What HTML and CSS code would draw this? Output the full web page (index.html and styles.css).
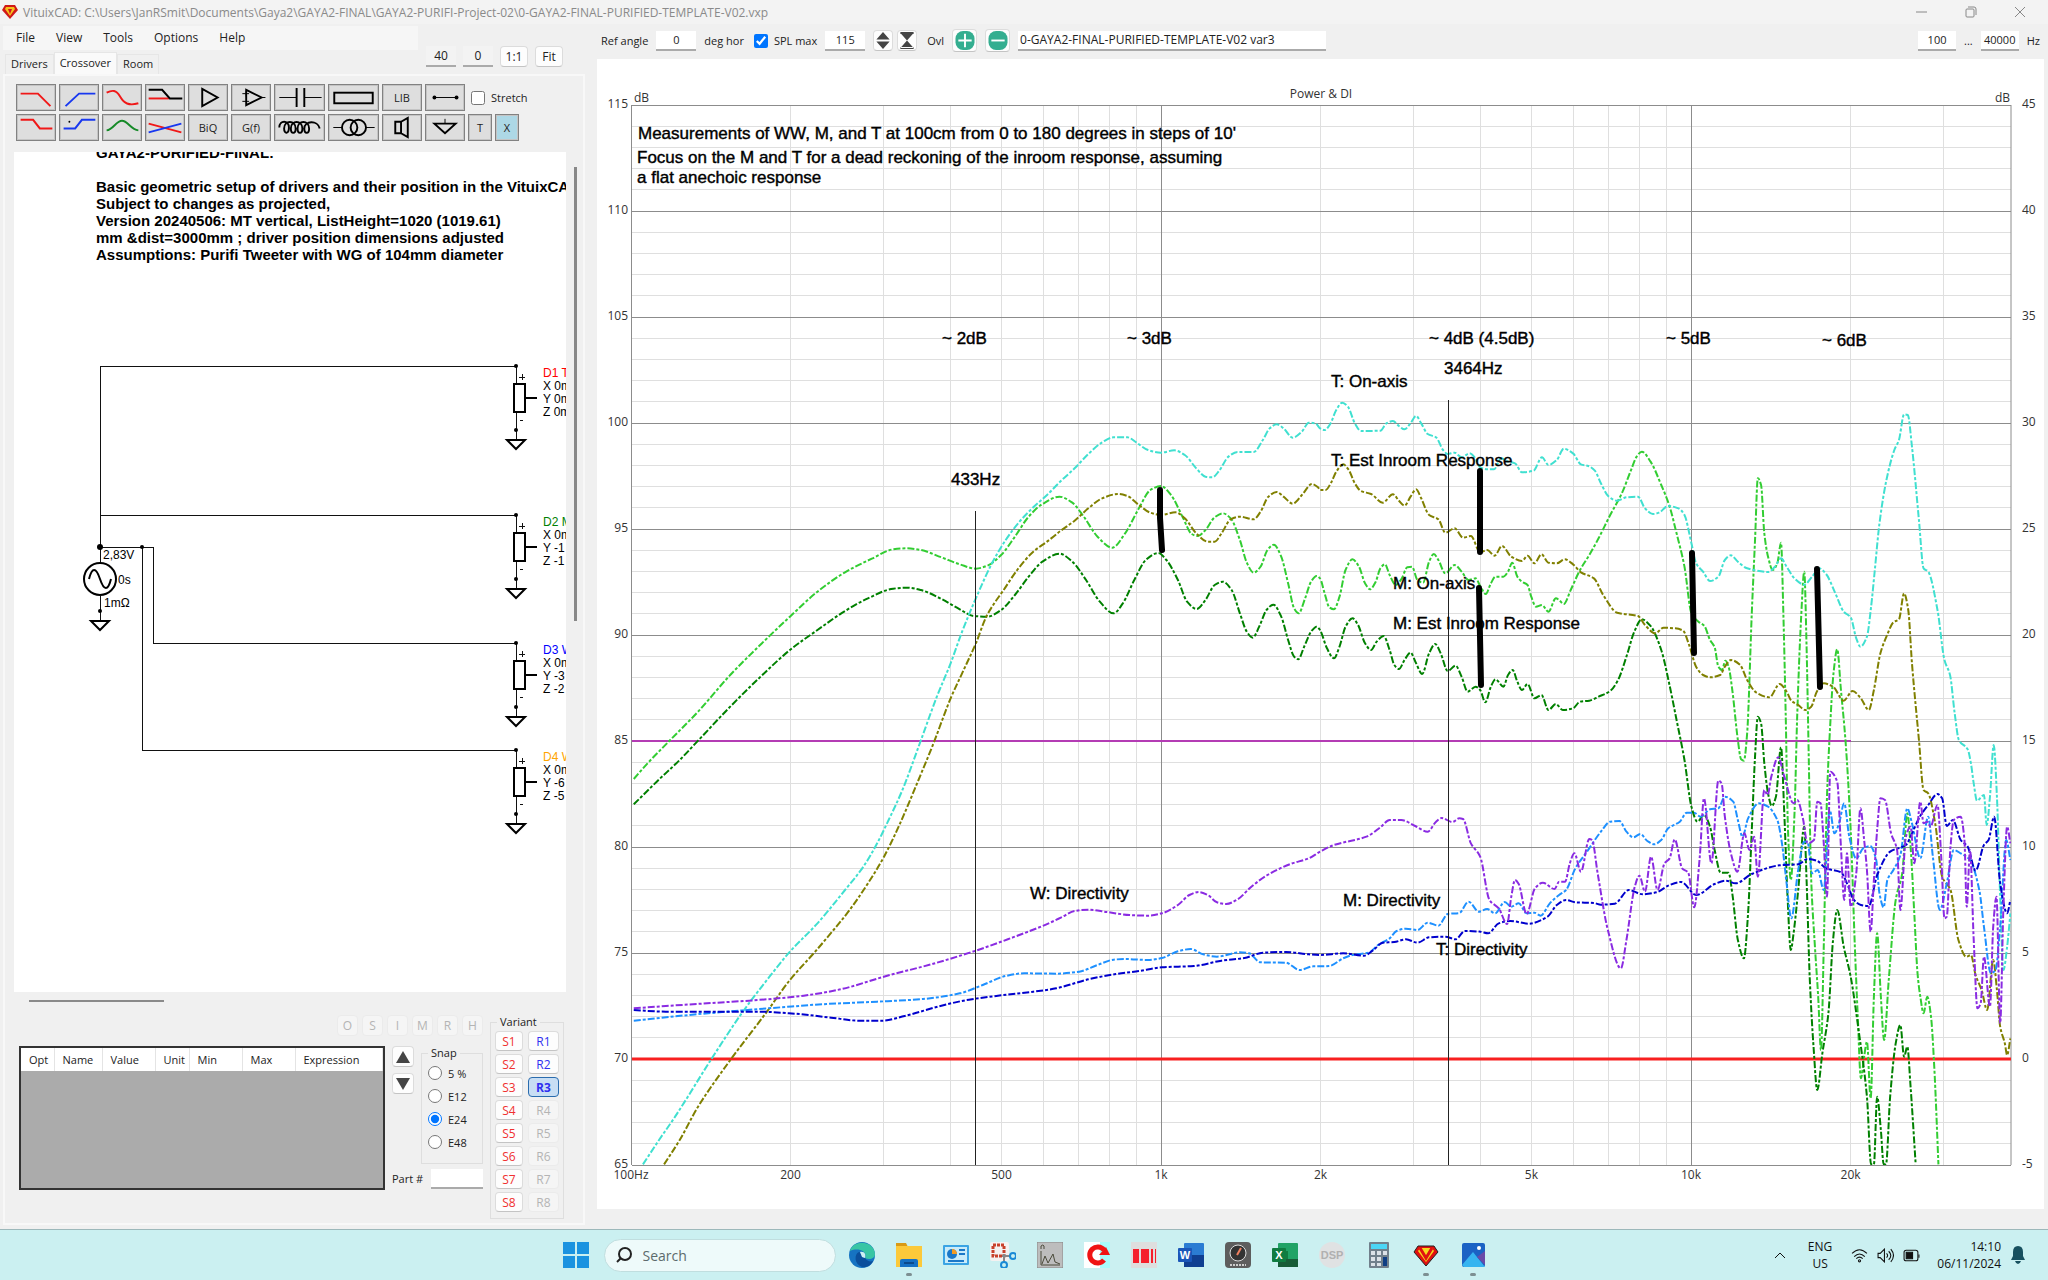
FILE: index.html
```html
<!DOCTYPE html>
<html lang="en">
  <head>
    <meta charset="UTF-8" />
    <title>VituixCAD</title>
    <link rel="stylesheet" href="styles.css">
  </head>
  <body>
    <!-- Title bar -->
    <header class="titlebar">
      <svg class="logo" viewBox="0 0 16 14"><path d="M3 0h10l3 5-8 9-8-9z" fill="#d01818"/><path d="M4 2h8l1 2-5 7-5-7z" fill="#f6c21c"/><path d="M6 4h4l-2 5z" fill="#d01818"/></svg>
      <span class="title">VituixCAD: C:\Users\JanRSmit\Documents\Gaya2\GAYA2-FINAL\GAYA2-PURIFI-Project-02\0-GAYA2-FINAL-PURIFIED-TEMPLATE-V02.vxp</span>
      <div class="window-buttons">
        <button aria-label="Minimize"><svg viewBox="0 0 12 12"><path d="M0 6h11"/></svg></button>
        <button aria-label="Restore"><svg viewBox="0 0 12 12"><rect x="1" y="3" width="8" height="8" rx="1"/><path d="M3 1h6q2 0 2 2v6"/></svg></button>
        <button aria-label="Close"><svg viewBox="0 0 12 12"><path d="M1 1l10 10M11 1L1 11"/></svg></button>
      </div>
    </header>

    <main class="workspace">
      <!-- Left side -->
      <section class="side">
        <nav class="menu">
          <button>File</button><button>View</button><button>Tools</button><button>Options</button><button>Help</button>
        </nav>
        <div class="tab-row">
          <div class="tabs">
            <button>Drivers</button><button class="active">Crossover</button><button>Room</button>
          </div>
          <div class="zoom-box">
            <input class="field" value="40" aria-label="Grid width" />
            <input class="field" value="0" aria-label="Grid offset" />
            <button class="btn">1:1</button>
            <button class="btn">Fit</button>
          </div>
        </div>

        <div class="tab-page">
          <div class="tools">
            <button aria-label="Low pass"><svg viewBox="0 0 38 26"><path class="red" d="M3 9h18l13 13"/></svg></button>
            <button aria-label="High pass"><svg viewBox="0 0 38 26"><path class="blue" d="M5 22L19 9h17"/></svg></button>
            <button aria-label="Shelf"><svg viewBox="0 0 38 26"><path class="red" d="M3 8C9 5 13 5 17 12S26 22 36 19"/></svg></button>
            <button aria-label="Slope"><svg viewBox="0 0 38 26"><path class="red" d="M2 14h21"/><path class="blk" d="M2 5h14l8 9h13"/></svg></button>
            <button aria-label="Buffer"><svg viewBox="0 0 38 26"><path class="blk" d="M13 4v18l16-9z"/></svg></button>
            <button aria-label="Op-amp"><svg viewBox="0 0 38 26"><path class="blk" d="M14 5v16l16-8z"/><path class="thin" d="M10 9h7M10 17h7M14 6v6M30 13h4"/></svg></button>
            <button aria-label="Capacitor"><svg viewBox="0 0 50 26"><path class="blk" d="M22 3v20M30 3v20"/><path class="thin" d="M4 13h18M30 13h18"/></svg></button>
            <button aria-label="Resistor"><svg viewBox="0 0 50 26"><rect class="blk" x="5" y="8" width="40" height="11"/></svg></button>
            <button>LIB</button>
            <button aria-label="Wire"><svg viewBox="0 0 38 26"><path class="thin" d="M8 13h23"/><circle cx="8" cy="13" r="2"/><circle cx="31" cy="13" r="2"/></svg></button>
            <label class="stretch"><input type="checkbox" /> Stretch</label>
            <button aria-label="Low shelf"><svg viewBox="0 0 38 26"><path class="red" d="M3 5h13l7 9h13"/></svg></button>
            <button aria-label="High shelf"><svg viewBox="0 0 38 26"><path class="blue" d="M3 14h12l7-9h14"/><circle cx="9" cy="7" r="1"/></svg></button>
            <button aria-label="Peak"><svg viewBox="0 0 38 26"><path class="green" d="M3 16C10 15 13 6 19 6s9 9 17 10"/></svg></button>
            <button aria-label="Cross"><svg viewBox="0 0 38 26"><path class="red" d="M2 9l34 9"/><path class="blue" d="M2 18l34-9"/></svg></button>
            <button>BiQ</button>
            <button>G(f)</button>
            <button aria-label="Inductor"><svg viewBox="0 0 50 26"><path class="blk" d="M4 13c0-8 10-8 10 0 0 7-5 7-5 1 0-9 12-9 12 0 0 6-5 6-5 0 0-9 12-9 12 0 0 6-5 6-5 0 0-9 12-9 12 0 0 6-5 6-5 0 0-8 14-9 16 0"/></svg></button>
            <button aria-label="Transformer"><svg viewBox="0 0 50 26"><circle class="blk" cx="21" cy="13" r="8"/><circle class="blk" cx="30" cy="13" r="8"/><path class="thin" d="M4 13h9M38 13h9"/></svg></button>
            <button aria-label="Driver"><svg viewBox="0 0 38 26"><path class="blk" d="M12 7h6v12h-6zM18 7l7-4v20l-7-4"/></svg></button>
            <button aria-label="Ground"><svg viewBox="0 0 38 26"><path class="blk" d="M8 9h22L19 19z"/><path class="thin" d="M19 4v5"/></svg></button>
            <div class="small-tools"><button>T</button><button class="delete">X</button></div>
          </div>

          <div class="canvas-row">
            <svg class="schematic" viewBox="0 0 552 840">
              <g class="note">
                <text x="82" y="6">GAYA2-PURIFIED-FINAL:</text>
                <text x="82" y="40">Basic geometric setup of drivers and their position in the VituixCAD</text>
                <text x="82" y="57">Subject to changes as projected,</text>
                <text x="82" y="74">Version 20240506: MT vertical, ListHeight=1020 (1019.61)</text>
                <text x="82" y="91">mm &amp;dist=3000mm ; driver position dimensions adjusted</text>
                <text x="82" y="108">Assumptions: Purifi Tweeter with WG of 104mm diameter</text>
              </g>
              <path class="wire" d="M502 214H86V411M86 363H502M86 395H139V491H502M128 395V598H502M86 444V469"/>
              <g class="dots"><circle cx="86" cy="395" r="3"/><circle cx="128" cy="395" r="2"/><circle cx="86" cy="459" r="2"/></g>
              <circle class="sym" cx="86" cy="427" r="16"/>
              <path class="sym" d="M75 427C78 415 82 415 86 427S94 439 97 427"/>
              <path class="sym" d="M77 469h18l-9 9z"/>
              <g class="part">
                <text x="89" y="407">2,83V</text><text x="104" y="432">0s</text><text x="90" y="455">1mΩ</text>
              </g>
              <defs>
                <g id="driver">
                  <path class="wire" d="M0 0V18M0 46V74"/>
                  <circle r="2"/><circle cy="64" r="2"/>
                  <path class="sym" d="M-2 18H9V46H-2zM9 32H21M-9 74H9L0 83z"/>
                  <path class="wire" d="M3 11h6M6 8v6M4 54h3"/>
                </g>
              </defs>
              <use href="#driver" x="502" y="214"/>
              <use href="#driver" x="502" y="363"/>
              <use href="#driver" x="502" y="491"/>
              <use href="#driver" x="502" y="598"/>
              <g class="part">
                <text class="d1" x="529" y="225">D1 T</text><text x="529" y="238">X 0mm</text><text x="529" y="251">Y 0mm</text><text x="529" y="264">Z 0mm</text>
                <text class="d2" x="529" y="374">D2 M</text><text x="529" y="387">X 0mm</text><text x="529" y="400">Y -1</text><text x="529" y="413">Z -1</text>
                <text class="d3" x="529" y="502">D3 W</text><text x="529" y="515">X 0mm</text><text x="529" y="528">Y -3</text><text x="529" y="541">Z -2</text>
                <text class="d4" x="529" y="609">D4 W</text><text x="529" y="622">X 0mm</text><text x="529" y="635">Y -6</text><text x="529" y="648">Z -5</text>
              </g>
            </svg>
            <div class="vscroll"></div>
          </div>
          <div class="hscroll"></div>

          <div class="bottom">
            <div class="bottom-left">
              <div class="letters">
                <button class="btn" disabled>O</button><button class="btn" disabled>S</button><button class="btn" disabled>I</button><button class="btn" disabled>M</button><button class="btn" disabled>R</button><button class="btn" disabled>H</button>
              </div>
              <div class="params">
                <div class="param-box">
                  <table>
                    <thead><tr><th class="w-opt">Opt</th><th class="w-name">Name</th><th class="w-value">Value</th><th class="w-unit">Unit</th><th class="w-min">Min</th><th class="w-min">Max</th><th>Expression</th></tr></thead>
                  </table>
                </div>
                <div class="arrows">
                  <button class="btn" aria-label="Up"><svg viewBox="0 0 14 12"><path d="M7 0l7 12H0z"/></svg></button>
                  <button class="btn" aria-label="Down"><svg viewBox="0 0 14 12"><path d="M7 12L0 0h14z"/></svg></button>
                </div>
                <fieldset class="snap">
                  <legend>Snap</legend>
                  <label><input type="radio" name="snap" /> 5 %</label>
                  <label><input type="radio" name="snap" /> E12</label>
                  <label><input type="radio" name="snap" checked /> E24</label>
                  <label><input type="radio" name="snap" /> E48</label>
                </fieldset>
                <label class="part-no">Part # <input class="field" /></label>
              </div>
            </div>
            <fieldset class="variant">
              <legend>Variant</legend>
              <button class="btn s">S1</button><button class="btn r">R1</button>
              <button class="btn s">S2</button><button class="btn r">R2</button>
              <button class="btn s">S3</button><button class="btn r current">R3</button>
              <button class="btn s">S4</button><button class="btn" disabled>R4</button>
              <button class="btn s">S5</button><button class="btn" disabled>R5</button>
              <button class="btn s">S6</button><button class="btn" disabled>R6</button>
              <button class="btn s">S7</button><button class="btn" disabled>R7</button>
              <button class="btn s">S8</button><button class="btn" disabled>R8</button>
            </fieldset>
          </div>
        </div>
      </section>

      <!-- Chart side -->
      <section class="graph">
        <div class="graph-bar">
          <label for="angle">Ref angle</label>
          <input class="field num" id="angle" value="0" />
          <span>deg hor</span>
          <label class="spl"><input type="checkbox" checked /> SPL max</label>
          <input class="field num" value="115" aria-label="SPL max value" />
          <button class="btn mini" aria-label="Shift"><svg viewBox="0 0 14 18"><path d="M7 0l7 8H0zM7 18l7-8H0z"/></svg></button>
          <button class="btn mini" aria-label="Compress"><svg viewBox="0 0 14 18"><path d="M0 1h14L7 9zM0 17h14L7 9zM0 0h14v2H0zM0 16h14v2H0z"/></svg></button>
          <span class="ovl">Ovl</span>
          <button class="btn round" aria-label="Add overlay"><svg viewBox="0 0 20 20"><rect width="20" height="20" rx="8"/><path d="M10 3v14M3 10h14"/></svg></button>
          <button class="btn round" aria-label="Remove overlay"><svg viewBox="0 0 20 20"><rect width="20" height="20" rx="8"/><path d="M3 10h14"/></svg></button>
          <input class="field overlay-name" value="0-GAYA2-FINAL-PURIFIED-TEMPLATE-V02 var3" aria-label="Overlay name" />
          <div class="range">
            <input class="field" value="100" aria-label="From" /><span>...</span><input class="field" value="40000" aria-label="To" /><span>Hz</span>
          </div>
        </div>

        <svg class="chart" viewBox="597 59 1447 1150">
          <defs><clipPath id="plotArea"><rect x="632" y="105" width="1379" height="1060"/></clipPath></defs>
          <g id="grid"></g>
          <g id="traces" clip-path="url(#plotArea)"></g>
          <path class="marker" d="M975 511V1165M1448 400V1165"/>
          <path class="bar" d="M1160 490V518L1162 550M1480 471V552M1479 588L1481 685M1692 553L1694 653M1817 569L1820 687"/>
          <g class="notes">
            <text x="638" y="139">Measurements of WW, M, and T at 100cm from 0 to 180 degrees in steps of 10'</text>
            <text x="637" y="163">Focus on the M and T for a dead reckoning of the inroom response, assuming</text>
            <text x="637" y="183">a flat anechoic response</text>
            <text x="942" y="344">~ 2dB</text>
            <text x="1127" y="344">~ 3dB</text>
            <text x="1429" y="344">~ 4dB (4.5dB)</text>
            <text x="1666" y="344">~ 5dB</text>
            <text x="1822" y="346">~ 6dB</text>
            <text x="1444" y="374">3464Hz</text>
            <text x="1331" y="387">T: On-axis</text>
            <text x="1331" y="466">T: Est Inroom Response</text>
            <text x="1393" y="589">M: On-axis</text>
            <text x="1393" y="629">M: Est Inroom Response</text>
            <text x="951" y="485">433Hz</text>
            <text x="1030" y="899">W: Directivity</text>
            <text x="1343" y="906">M: Directivity</text>
            <text x="1436" y="955">T: Directivity</text>
          </g>
          <g class="axis" id="axis">
            <text x="1321" y="98" text-anchor="middle">Power &amp; DI</text>
            <text x="634" y="102">dB</text>
            <text x="1995" y="102">dB</text>
          </g>
        </svg>
      </section>
    </main>

    <!-- Taskbar -->
    <footer class="taskbar">
      <div></div>
      <div class="apps">
        <button class="start" aria-label="Start"><svg viewBox="0 0 26 26"><path fill="#1b93e0" d="M0 0h12v12H0zM14 0h12v12H14zM0 14h12v12H0zM14 14h12v12H14z"/></svg></button>
        <label class="search"><svg viewBox="0 0 16 16"><circle cx="9" cy="7" r="6"/><path d="M5 11l-4 4"/></svg><input placeholder="Search" aria-label="Search" /></label>
        <button aria-label="Edge"><svg viewBox="0 0 26 26"><circle cx="13" cy="13" r="13" fill="#1673c2"/><path d="M1 9C4-3 25-2 26 12c0 5-6 6-10 4 3-6-6-11-15-7z" fill="#38c5a4"/><path d="M16 16c-5 0-3-6-6-6-5 2-5 12 3 15 6 1 10-3 11-6-3 1-6 0-8-3z" fill="#0b4f9c"/><path d="M11 10c5-1 6 3 5 6l-3-1z" fill="#cdf0f2"/></svg></button>
        <button class="open" aria-label="Files"><svg viewBox="0 0 26 26"><path fill="#d99a16" d="M0 1h10l2 4H0z"/><path fill="#fcc93a" d="M0 4h26v21H0z"/><path fill="#1470c4" d="M4 25v-6q0-2 2-2h14q2 0 2 2v6z"/><path fill="#0a4a8c" d="M8 20h10v2H8z"/></svg></button>
        <button aria-label="Control panel"><svg viewBox="0 0 26 26"><rect x="0" y="3" width="26" height="20" rx="1" fill="#3ba4e4"/><rect x="2" y="5" width="22" height="16" fill="#c9ecfa"/><circle cx="9" cy="12" r="5" fill="#1b78c8"/><path d="M9 12V7a5 5 0 0 1 5 5z" fill="#f59b22"/><path d="M16 8h6M16 12h6M5 19h16" stroke="#1b78c8" stroke-width="2"/></svg></button>
        <button aria-label="Snipping tool"><svg viewBox="0 0 26 26"><rect width="19" height="19" rx="2" fill="#f4f1f0"/><path d="M3 3h11v11H3z" fill="none" stroke="#c8402a" stroke-width="3" stroke-dasharray="3 1"/><path d="M14 12v9M12 14h9" stroke="#888" stroke-width="2"/><circle cx="14" cy="23" r="3" fill="none" stroke="#1a8ad6" stroke-width="2"/><circle cx="23" cy="14" r="3" fill="none" stroke="#1a8ad6" stroke-width="2"/></svg></button>
        <button aria-label="Measurement"><svg viewBox="0 0 26 26"><path fill="#bdbdbd" stroke="#888" d="M0 0h26v26H0z"/><path d="M4 9v14h19M5 22l3-8 3 7 5-9 2 8 5 2M4 7V4q2-2 3 0v3" fill="none" stroke="#4a4a3a"/></svg></button>
        <button aria-label="Redo"><svg viewBox="0 0 26 26"><path fill="#fff" d="M0 0h16v26H0z"/><path fill="#a8fafa" d="M16 0h10v26H16z"/><path d="M20 18a8 8 0 1 1 0-10" fill="none" stroke="#f01414" stroke-width="5"/><path fill="#f01414" d="M15 13h11l-4-8z"/></svg></button>
        <button aria-label="Bars"><svg viewBox="0 0 26 26"><path fill="#dedede" d="M0 0h26v26H0z"/><path fill="#f5202c" d="M2 7h6v14H2zM10 7h8v14h-8zM20 7h2v14h-2zM24 7h1v14h-1z"/></svg></button>
        <button aria-label="Word"><svg viewBox="0 0 26 26"><rect x="6" y="1" width="20" height="24" rx="1" fill="#2b7cd3"/><path fill="#103f91" d="M6 13h20v12H6z"/><rect y="6" width="14" height="14" rx="1" fill="#1a56b8"/><text x="7" y="17" class="tile">W</text></svg></button>
        <button aria-label="Meter"><svg viewBox="0 0 26 26"><rect width="26" height="26" rx="4" fill="#5d5d5d"/><circle cx="13" cy="11" r="8" fill="#333" stroke="#ddd"/><path d="M12 13l4-7" stroke="#f08060" stroke-width="2"/><path d="M5 23h16" stroke="#ccc" stroke-width="2" stroke-dasharray="2 1"/></svg></button>
        <button aria-label="Excel"><svg viewBox="0 0 26 26"><rect x="6" y="1" width="20" height="24" rx="1" fill="#21a366"/><path fill="#185c37" d="M6 17h20v8H6z"/><path fill="#107c41" d="M6 9h10v8H6z"/><rect y="6" width="14" height="14" rx="1" fill="#107c41"/><text x="7" y="17" class="tile">X</text></svg></button>
        <button aria-label="DSP"><svg viewBox="0 0 26 26"><circle cx="13" cy="13" r="13" fill="#e0e2e3"/><text x="13" y="17" class="tile dsp">DSP</text></svg></button>
        <button aria-label="Calculator"><svg viewBox="0 0 26 26"><rect x="3" width="20" height="26" rx="1" fill="#71808c"/><path fill="#4cd6f6" d="M5 2h16v5H5z"/><path fill="#dce2e8" d="M5 9h4v4H5zM11 9h4v4h-4zM17 9h4v4h-4zM5 15h4v4H5zM11 15h4v4h-4zM5 21h4v3H5zM11 21h4v3h-4z"/><path fill="#0f3f84" d="M17 15h4v9h-4z"/></svg></button>
        <button class="open" aria-label="VituixCAD"><svg viewBox="0 0 26 26"><path d="M5 4h16l4 6-12 14L1 10z" fill="#e01010" stroke="#222"/><path d="M7 6h12l2 3-8 11-8-11z" fill="#f6d81c"/><path d="M7 6l6 10 6-10" fill="none" stroke="#e01010" stroke-width="3"/></svg></button>
        <button class="open" aria-label="Photos"><svg viewBox="0 0 26 26"><rect x="2" y="1" width="23" height="24" rx="2" fill="#1b62c4"/><path d="M2 23l11-13 12 15H4z" fill="#36b4f0"/><path d="M17 15l8-6v14z" fill="#6a4aa8"/><circle cx="19" cy="6" r="2" fill="#fff"/></svg></button>
      </div>
      <div class="tray">
        <svg class="chev" viewBox="0 0 12 8"><path d="M1 7l5-5 5 5"/></svg>
        <div class="lang">ENG<br />US</div>
        <svg class="ic" viewBox="0 0 16 14"><path d="M1 5q7-7 14 0M3 8q5-5 10 0M5 10q3-3 6 0"/><circle cx="8" cy="12" r="1"/></svg>
        <svg class="ic" viewBox="0 0 16 14"><path d="M1 5h2l4-4v12L3 9H1zM9 5q2 2 0 4M11 3q4 4 0 8M13 1q5 6 0 12"/></svg>
        <svg class="ic" viewBox="0 0 16 14"><rect x="1" y="2" width="13" height="10" rx="2"/><path d="M3 4h6v6H3z" fill="#111"/><path d="M15 6v3"/></svg>
        <div class="clock">14:10<br />06/11/2024</div>
        <svg class="bell" viewBox="0 0 16 18"><path d="M8 0q5 0 5 6v4l2 4H1l2-4V6q0-6 5-6zM5 15h6q-1 3-3 3t-3-3z"/></svg>
      </div>
    </footer>
    <script src="script.js"></script>
  </body>
</html>
```
FILE: styles.css
```css
* {
  box-sizing: border-box;
}

body {
  margin: 0;
  min-height: 100vh;
  display: grid;
  grid-template-rows: 24px 1fr 51px;
  background: #f0f0f0;
  color: #222;
  font-family: "Open Sans", "Liberation Sans", sans-serif;
  font-size: 12px;
}

button,
input {
  font: inherit;
  color: inherit;
  margin: 0;
  padding: 0;
}

button {
  border: none;
  background: none;
}

.titlebar {
  display: flex;
  align-items: center;
  background: #f3f3f3;
  color: #8a8a8a;
  padding: 0 22px 0 2px;
}

.logo {
  width: 16px;
  height: 14px;
  margin-right: 5px;
}

.title {
  flex: 1;
  font-size: 12px;
}

.window-buttons {
  display: flex;
  gap: 37px;
}

.window-buttons svg {
  display: block;
  width: 12px;
  height: 12px;
  fill: none;
  stroke: #888;
}

.workspace {
  display: grid;
  grid-template-columns: 597px 1fr;
}

/* left side */
.side {
  display: flex;
  flex-direction: column;
  padding: 2px 12px 4px 3px;
}

.menu {
  display: flex;
  gap: 21px;
  width: 415px;
  height: 24px;
  padding: 0 0 2px 13px;
  background: #f6f6f6;
}

.tab-row {
  display: flex;
  justify-content: space-between;
  align-items: flex-end;
  height: 24px;
}

.tabs {
  display: flex;
  align-items: flex-end;
  padding-left: 2px;
}

.tabs button {
  height: 20px;
  padding: 0 5px 2px;
  border: 1px solid #e6e6e6;
  border-bottom: none;
  font-size: 11px;
}

.tabs .active {
  height: 22px;
  background: #fafafa;
}

.zoom-box {
  display: flex;
  gap: 7px;
  padding: 0 22px 7px 0;
}

.zoom-box .field {
  width: 30px;
  height: 21px;
  background: #f3f3f3;
  text-align: center;
}

.zoom-box .btn {
  width: 28px;
}

.field {
  min-width: 0;
  height: 20px;
  border: none;
  border-bottom: 2px solid #aaa;
  background: #fff;
}

.btn {
  height: 21px;
  border: 1px solid #dcdcdc;
  border-bottom-color: #c4c4c4;
  border-radius: 4px;
  background: #fdfdfd;
}

.btn:disabled {
  color: #b4b4b4;
  background: #f5f5f5;
  border-color: #ebebeb;
}

.tab-page {
  flex: 1;
  border: 2px solid #f8f8f8;
  padding: 8px 17px 0 9px;
}

.tools {
  display: grid;
  grid-template-columns: repeat(6, 40px) 51px 51px 40px 40px 1fr;
  grid-auto-rows: 27px;
  gap: 3px;
  padding-left: 2px;
}

.tools button {
  border: 1px solid #828282;
  outline: 1px solid #c4c4c4;
  outline-offset: -2px;
  background: #dedede;
  font-size: 11px;
}

.tools svg {
  display: block;
  width: 100%;
  height: 25px;
}

.red,
.blue,
.green,
.blk,
.thin {
  fill: none;
  stroke-width: 2px;
}

.red { stroke: #f01818; }
.blue { stroke: #1838f0; }
.green { stroke: #168a28; }
.blk { stroke: #000; }
.thin { stroke: #000; stroke-width: 1px; }

.stretch {
  display: flex;
  align-items: center;
  gap: 6px;
  padding-left: 3px;
  font-size: 11px;
}

.stretch input,
.spl input {
  width: 14px;
  height: 14px;
}

.small-tools {
  display: flex;
  gap: 3px;
}

.small-tools button {
  width: 24px;
}

.small-tools .delete {
  background: #add8e6;
}

.canvas-row {
  display: flex;
  gap: 8px;
  margin-top: 11px;
}

.schematic {
  display: block;
  flex: 1;
  min-width: 0;
  background: #fff;
  overflow: hidden;
}

.note text {
  font: bold 15px "Liberation Sans", sans-serif;
}

.part text {
  font: 12px "Liberation Sans", sans-serif;
}

.wire {
  fill: none;
  stroke: #111;
  stroke-width: 1px;
  shape-rendering: crispEdges;
}

.sym {
  fill: none;
  stroke: #000;
  stroke-width: 2px;
}

.d1 { fill: red; }
.d2 { fill: green; }
.d3 { fill: blue; }
.d4 { fill: orange; }

.vscroll {
  width: 3px;
  height: 454px;
  margin: 15px -11px 0 0;
  background: #888;
}

.hscroll {
  width: 135px;
  height: 2px;
  margin: 8px 0 0 15px;
  background: #8a8a8a;
}

.bottom {
  display: flex;
  justify-content: space-between;
  margin-top: 13px;
  padding: 0 2px 0 5px;
}

.letters {
  display: flex;
  justify-content: flex-end;
  gap: 4px;
}

.letters .btn {
  width: 21px;
}

.params {
  display: grid;
  grid-template-columns: 366px 22px 62px;
  gap: 0 7px;
  margin-top: 6px;
}

.param-box {
  grid-row: span 2;
  height: 144px;
  margin-top: 4px;
  border: 2px solid #333;
  background: #ababab;
}

.param-box table {
  width: 100%;
  border-collapse: collapse;
  table-layout: fixed;
  background: #fff;
}

.param-box th {
  height: 23px;
  padding: 0 0 0 8px;
  border-right: 1px solid #e4e4e4;
  font-weight: normal;
  font-size: 11px;
  text-align: left;
}

.w-opt { width: 33px; }
.w-name { width: 48px; }
.w-value { width: 53px; }
.w-unit { width: 34px; }
.w-min { width: 53px; }

.arrows {
  display: flex;
  flex-direction: column;
  gap: 6px;
  padding-top: 4px;
}

.arrows svg,
.mini svg {
  width: 14px;
  height: 12px;
  display: block;
  margin: auto;
  fill: #444;
}

fieldset {
  margin: 0;
  border: 1px solid #dedede;
}

legend {
  padding: 0 3px;
  line-height: 14px;
}

.snap {
  display: flex;
  flex-direction: column;
  gap: 7px;
  height: 118px;
  margin-top: 4px;
  padding: 5px 0 0 6px;
}

.snap legend,
.variant legend {
  margin-left: 0;
  font-size: 11px;
}

.snap label {
  display: flex;
  align-items: center;
  gap: 6px;
  height: 16px;
  font-size: 11px;
}

.snap input {
  width: 14px;
  height: 14px;
}

.part-no {
  grid-column: 2 / 4;
  display: flex;
  align-items: center;
  gap: 8px;
  white-space: nowrap;
  font-size: 11px;
}

.part-no .field {
  flex: 1;
}

.variant {
  display: grid;
  grid-template-columns: 28px 31px;
  grid-auto-rows: 20px;
  gap: 3px 5px;
  width: 74px;
  height: 204px;
  padding: 2px 4px;
}

.variant legend {
  margin-left: 2px;
}

.variant .btn {
  height: 20px;
}

.s { color: #f03030; }
.r { color: #3030f0; }

.variant .current {
  border: 1px solid #2a6cae;
  background: #c8def4;
  font-weight: bold;
}

/* graph side */
.graph {
  padding-right: 4px;
}

.graph-bar {
  display: flex;
  align-items: center;
  gap: 8px;
  height: 35px;
  padding: 0 4px 2px;
  font-size: 11px;
}

.num {
  width: 40px;
  text-align: center;
}

.spl {
  display: flex;
  align-items: center;
  gap: 6px;
  padding-left: 2px;
}

.mini {
  width: 20px;
}

.mini svg {
  height: 17px;
}

.mini + .mini {
  margin-left: -4px;
}

.ovl {
  margin-left: 2px;
}

.round {
  width: 25px;
  height: 23px;
}

.round svg {
  display: block;
  width: 20px;
  height: 19px;
  margin: auto;
  fill: #34ae90;
  stroke: #fff;
  stroke-width: 2px;
}

.round svg rect {
  stroke: none;
}

.overlay-name {
  width: 308px;
  padding-left: 2px;
  font-size: 12px;
}

.range {
  display: flex;
  align-items: center;
  gap: 8px;
  margin-left: auto;
}

.range .field {
  width: 38px;
  text-align: center;
}

.chart {
  display: block;
  width: 100%;
  background: #fff;
}

.minor {
  fill: none;
  stroke: #dfdfdf;
  stroke-width: 1px;
}

.major {
  fill: none;
  stroke: #8c8c8c;
  stroke-width: 1px;
}

.limit {
  stroke: #b43cb4;
  stroke-width: 2px;
}

.zero {
  stroke: #f82020;
  stroke-width: 3px;
}

.trace {
  fill: none;
  stroke-width: 2px;
  stroke-dasharray: 7 2 3 2;
}

.marker {
  stroke: #222;
  shape-rendering: crispEdges;
}

.bar {
  fill: none;
  stroke: #000;
  stroke-width: 6px;
  stroke-linecap: round;
}

.notes text {
  font: 17px "Liberation Sans", sans-serif;
  fill: #000;
  stroke: #000;
  stroke-width: 0.4px;
}

.axis text {
  font-size: 12px;
  fill: #333;
}

/* taskbar */
.taskbar {
  display: grid;
  grid-template-columns: 1fr auto 1fr;
  align-items: center;
  border-top: 1px solid #9cb8ba;
  background: #cbf0f1;
}

.apps {
  display: flex;
  align-items: center;
  gap: 21px;
}

.apps button {
  position: relative;
  width: 26px;
  height: 26px;
}

.apps button svg {
  display: block;
  width: 26px;
  height: 26px;
}

.apps .start {
  margin-right: -6px;
}

.apps .open::after {
  content: "";
  position: absolute;
  left: 10px;
  bottom: -8px;
  width: 6px;
  height: 3px;
  border-radius: 2px;
  background: #7d8f92;
}

.search {
  display: flex;
  align-items: center;
  gap: 11px;
  width: 232px;
  height: 33px;
  margin-right: -8px;
  padding-left: 11px;
  border: 1px solid #c0dedf;
  border-radius: 17px;
  background: #eefafa;
}

.search svg {
  width: 16px;
  height: 16px;
  fill: none;
  stroke: #222;
  stroke-width: 2px;
}

.search input {
  width: 150px;
  border: none;
  background: none;
  font-size: 14px;
}

.search input::placeholder {
  color: #5c6a6c;
}

.tile {
  font: bold 11px "Liberation Sans", sans-serif;
  fill: #fff;
  text-anchor: middle;
}

.dsp {
  fill: #b0b0b0;
}

.tray {
  display: flex;
  justify-content: flex-end;
  align-items: center;
  gap: 9px;
  padding-right: 22px;
  line-height: 17px;
  color: #111;
}

.tray svg {
  fill: none;
  stroke: #111;
}

.tray .chev {
  width: 12px;
  height: 8px;
  margin-right: 13px;
}

.lang {
  margin-right: 10px;
  text-align: center;
}

.tray .ic {
  width: 17px;
  height: 15px;
}

.clock {
  margin-left: 8px;
  text-align: right;
}

.tray .bell {
  width: 16px;
  height: 18px;
  fill: #17505f;
  stroke: none;
}
```
FILE: script.js
```js
const SVG = "http://www.w3.org/2000/svg";
const grid = document.getElementById("grid");
const traces = document.getElementById("traces");
const axis = document.getElementById("axis");

// plot area
const left = 632, right = 2011, top_ = 105, bottom = 1165;
const xOf = (f) => 631 + 530 * Math.log10(f / 100);
const yOf = (db) => top_ + (115 - db) * 21.2;

function add(parent, tag, attrs, text) {
  const el = document.createElementNS(SVG, tag);
  for (const k in attrs) el.setAttribute(k, attrs[k]);
  if (text !== undefined) el.textContent = text;
  parent.appendChild(el);
}

// crisp one pixel lines
const snap = (v) => Math.floor(v) + 0.5;

let minor = "", major = "";
for (let db = 65; db <= 115; db++) {
  const line = `M${left} ${snap(yOf(db))}H${right}`;
  if (db % 5) minor += line;
  else major += line;
}
for (const dec of [100, 1000, 10000]) {
  for (let n = 1; n < 10; n++) {
    const f = dec * n;
    if (f > 30000) break;
    const line = `M${snap(xOf(f))} ${top_}V${bottom}`;
    if (n === 1) major += line;
    else minor += line;
  }
}
major += `M${right} ${top_}V${bottom}`;
add(grid, "path", { class: "minor", d: minor });
add(grid, "path", { class: "major", d: major });
add(grid, "path", { class: "limit", d: `M${left} 741H1851` });
add(grid, "path", { class: "zero", d: `M${left} 1059H${right}` });

for (let db = 65; db <= 115; db += 5) {
  add(axis, "text", { x: 628, y: yOf(db) + 3, "text-anchor": "end" }, db);
  add(axis, "text", { x: 2022, y: yOf(db) + 3 }, db - 70);
}
const ticks = { "100Hz": 100, 200: 200, 500: 500, "1k": 1000, "2k": 2000, "5k": 5000, "10k": 10000, "20k": 20000 };
for (const t in ticks) {
  add(axis, "text", { x: xOf(ticks[t]), y: 1179, "text-anchor": "middle" }, t);
}

// every trace is digitised in two halves, low band and high band
const data = [
  { color: "#32cd32", y0: 380,
    low: "30,1197 60,1150 108,1082 170,995 240,885 300,802 370,710 430,635 490,577 550,535 595,508 625,505 655,510 700,532 740,553 775,566 800,557 830,525 860,470 890,410 920,372 957,350 985,368 1010,410 1040,470 1072,503 1100,460 1130,385 1155,330 1178,318 1200,345 1225,410 1245,462 1258,468 1275,450 1295,412 1313,400 1330,415 1350,480 1365,548 1380,578 1395,560 1410,510 1424,494 1440,530 1455,610 1468,685 1478,700 1492,655 1505,605 1517,588",
    high: "0,595 10,640 20,682 30,688 42,650 55,570 70,538 84,560 97,610 108,628 120,605 130,565 140,553 150,585 163,615 175,598 188,562 198,560 210,600 222,608 235,545 245,522 255,540 270,580 290,555 305,575 320,600 335,595 345,618 357,642 368,610 378,590 395,590 405,575 414,548 425,590 435,605 447,615 455,650 465,680 478,675 492,695 508,655 515,660 525,672 540,630 560,570 580,525 600,475 625,405 650,340 670,270 682,230 693,215 712,245 735,315 752,375 768,460 785,560 800,700 815,725 828,738 840,780 850,802 858,860 866,870 873,842 880,860 888,930 900,1080 907,1138 913,1142 920,1060 930,700 937,480 943,295 950,315 957,460 965,530 975,570 985,550 993,488 998,700 1003,1000 1008,1350 1014,1500 1022,1300 1028,1000 1036,720 1043,575 1048,800 1052,1080 1058,1500 1066,1700 1073,1850 1079,2010 1085,1700 1092,1250 1098,1060 1106,880 1114,808 1122,930 1132,1085 1143,1350 1152,1700 1158,1900 1165,2095 1172,2030 1178,1985 1186,2155 1193,1850 1200,1660 1208,1850 1215,1980 1225,1800 1240,1560 1254,1480 1265,1300 1272,1400 1280,1600 1287,1780 1293,1850 1300,1900 1308,1850 1316,1910 1323,2060 1332,2353" },
  { color: "#008000", y0: 380,
    low: "30,1273 80,1205 130,1140 170,1082 240,980 310,885 370,810 430,750 490,693 540,655 595,626 625,623 655,630 700,657 740,688 770,708 800,710 830,690 860,645 890,590 920,545 957,521 985,545 1015,600 1045,665 1075,700 1095,670 1120,600 1145,540 1172,519 1190,540 1215,600 1235,665 1256,687 1275,660 1295,615 1313,605 1332,630 1350,700 1365,755 1378,773 1392,740 1408,690 1423,674 1440,710 1455,780 1468,830 1477,838 1490,800 1505,755 1517,740",
    high: "0,750 15,805 30,835 42,800 55,740 70,715 82,735 97,790 110,810 122,785 137,768 150,810 160,855 170,867 182,840 195,818 207,850 220,882 235,820 248,792 260,820 275,873 292,857 305,890 318,935 335,920 345,930 356,967 368,920 378,898 395,920 405,885 415,870 425,905 435,930 447,912 462,955 477,945 492,990 508,972 523,990 545,985 560,965 580,962 600,950 625,933 642,900 660,830 677,755 693,718 712,738 735,810 752,910 768,1020 785,1140 800,1280 813,1325 827,1305 840,1340 850,1410 863,1478 880,1478 888,1540 900,1680 913,1735 922,1600 930,1350 937,1130 943,1010 950,1030 957,1150 965,1240 973,1278 982,1250 993,1102 1000,1300 1007,1550 1014,1710 1020,1660 1030,1530 1043,1340 1048,1500 1055,1800 1063,2000 1071,2130 1082,2020 1095,1900 1105,1680 1114,1590 1128,1700 1143,1790 1160,1950 1178,2150 1187,2353 1193,2353 1200,2150 1208,2250 1214,2353 1219,2353 1228,2150 1240,1990 1250,1935 1258,2030 1265,2000 1272,2120 1283,2353" },
  { color: "#40e0d0", y0: 380,
    low: "50,2353 85,2280 120,2210 200,2035 265,1900 320,1800 370,1715 430,1630 490,1530 530,1460 560,1390 585,1320 615,1230 655,1082 690,950 720,850 745,755 775,655 810,550 840,480 870,425 900,382 930,345 960,303 990,265 1020,222 1050,187 1075,172 1105,172 1125,188 1150,210 1178,218 1207,211 1230,225 1255,265 1275,290 1290,292 1305,272 1325,230 1345,216 1380,216 1400,180 1415,145 1430,133 1445,145 1465,173 1485,155 1500,128 1515,130",
    high: "0,145 10,150 22,132 35,90 48,68 60,80 75,130 88,153 130,152 143,130 157,123 170,138 182,148 195,130 207,108 218,130 232,162 250,172 265,210 275,222 290,218 305,232 322,220 335,235 345,262 360,268 375,268 390,235 405,245 420,250 435,277 460,272 478,232 492,255 510,240 525,206 545,220 562,253 578,258 592,272 605,310 622,350 640,362 660,352 685,350 700,385 717,402 730,398 750,378 772,385 785,405 800,490 810,550 825,575 840,603 858,590 872,540 885,526 900,545 920,565 965,576 980,560 993,535 1005,560 1022,595 1043,614 1060,590 1075,565 1090,582 1110,640 1128,695 1143,712 1155,775 1164,800 1178,770 1187,680 1195,570 1205,430 1220,300 1237,210 1247,180 1258,103 1266,105 1275,200 1290,420 1300,565 1310,575 1330,690 1345,840 1357,885 1367,1000 1376,1080 1395,1108 1402,1150 1408,1210 1415,1262 1430,1245 1436,1335 1443,1250 1451,1095 1458,1250 1465,1550 1472,1770 1480,1700 1487,1600" },
  { color: "#808000", y0: 380,
    low: "96,2353 130,2280 170,2180 243,2035 320,1895 370,1800 425,1715 465,1650 500,1590 540,1510 575,1430 610,1330 650,1200 685,1082 705,1008 720,955 745,880 775,790 797,712 815,670 833,635 865,570 900,515 930,485 960,452 990,422 1020,385 1050,355 1085,342 1105,348 1130,375 1155,398 1178,405 1210,397 1230,415 1255,460 1280,485 1295,485 1310,460 1330,418 1350,410 1380,418 1395,395 1412,350 1430,336 1445,350 1465,371 1485,345 1507,312 1520,322",
    high: "0,330 12,330 25,305 35,275 50,253 62,270 75,310 88,333 110,342 135,368 157,343 170,362 182,377 195,350 207,328 218,355 235,405 255,418 270,458 290,445 308,473 325,468 345,517 360,510 376,527 392,498 412,530 435,543 447,527 462,550 477,523 492,548 510,550 527,538 545,553 562,577 590,595 610,645 640,698 685,708 700,735 722,760 740,743 765,745 782,752 795,795 810,860 825,885 840,892 862,885 872,860 885,840 905,855 920,900 940,938 968,952 990,912 1005,935 1015,962 1030,975 1045,990 1058,980 1070,935 1085,910 1105,920 1128,962 1147,933 1165,955 1182,990 1193,930 1207,820 1220,770 1235,727 1247,718 1258,640 1267,690 1275,850 1290,1080 1300,1230 1310,1240 1325,1330 1340,1490 1358,1530 1375,1680 1392,1730 1402,1725 1412,1785 1425,1830 1437,1890 1450,1740 1458,1830 1465,1940 1475,1990 1480,2025 1487,1975" },
  { color: "#1e90ff", y0: 740,
    low: "30,842 150,825 250,813 350,802 450,792 560,785 660,777 740,760 790,735 840,708 880,700 950,701 1000,695 1040,675 1075,659 1100,657 1150,660 1180,654 1215,634 1243,627 1270,643 1300,650 1350,637 1370,640 1395,667 1450,668 1480,690 1510,679",
    high: "0,679 20,678 50,655 70,645 105,638 125,615 150,595 165,573 185,566 210,570 232,548 255,557 275,522 300,519 320,485 342,515 360,507 377,520 398,486 412,500 428,490 445,520 462,518 475,527 495,490 515,465 530,450 550,385 575,335 605,275 625,245 645,243 660,275 675,292 690,282 705,303 720,313 735,300 750,265 775,245 790,218 805,218 820,230 840,208 858,205 872,170 890,185 900,240 910,290 922,235 945,190 965,200 985,240 995,310 1005,430 1015,535 1030,390 1043,305 1050,305 1060,400 1072,390 1085,450 1098,210 1108,280 1118,250 1129,190 1140,290 1155,355 1170,325 1185,318 1198,360 1205,460 1214,502 1222,420 1235,390 1250,345 1265,205 1275,250 1293,355 1310,230 1320,350 1335,510 1350,430 1365,330 1380,340 1400,360 1420,450 1430,560 1445,700 1455,690 1465,560 1478,300 1487,360" },
  { color: "#0000cd", y0: 740,
    low: "30,810 100,815 300,815 380,821 460,833 520,842 570,842 620,828 700,797 760,779 830,766 900,755 950,745 1020,718 1080,702 1130,693 1180,682 1250,678 1310,662 1360,654 1400,638 1450,636 1500,643",
    high: "0,645 50,640 95,647 115,630 135,608 160,606 185,598 210,608 235,592 270,590 292,598 312,573 345,575 362,580 385,550 410,543 450,551 490,530 510,495 530,480 550,487 590,489 605,494 635,491 665,450 695,463 725,457 750,437 778,426 810,465 850,432 875,422 895,430 930,402 990,376 1030,373 1050,357 1070,362 1090,385 1122,397 1135,430 1150,480 1165,495 1182,498 1200,405 1228,335 1262,315 1275,280 1292,230 1310,195 1330,162 1340,175 1350,258 1363,240 1380,300 1395,320 1412,392 1430,315 1440,300 1452,230 1465,430 1480,520 1487,480" },
  { color: "#8a2be2", y0: 740,
    low: "30,805 100,798 200,789 300,780 400,767 480,748 580,708 680,672 775,632 850,595 920,558 960,533 990,513 1020,509 1060,516 1110,525 1150,527 1180,520 1215,495 1240,465 1260,456 1280,465 1300,487 1320,492 1345,478 1375,440 1410,405 1460,372 1500,355",
    high: "0,335 30,315 100,290 130,262 150,240 175,240 205,258 232,275 250,245 262,234 285,246 300,235 308,237 325,310 345,350 365,480 385,505 403,552 412,470 420,420 428,432 445,522 463,445 480,428 505,447 515,425 528,425 538,370 548,340 562,395 580,297 586,300 598,400 620,570 648,685 660,600 678,440 688,407 700,455 713,350 727,450 742,370 753,355 764,298 780,385 793,398 806,502 818,350 827,175 843,370 858,122 865,130 872,230 885,340 899,395 914,280 925,330 935,290 943,410 957,150 964,165 972,110 987,52 1000,110 1020,190 1028,180 1040,235 1050,310 1064,300 1071,185 1078,190 1085,310 1092,470 1099,95 1114,125 1122,320 1129,480 1135,340 1143,500 1155,400 1164,205 1172,300 1178,390 1186,575 1193,420 1200,270 1207,175 1217,180 1230,280 1243,330 1250,510 1262,290 1272,260 1280,370 1293,185 1300,250 1308,245 1315,260 1330,195 1338,350 1345,535 1350,530 1358,320 1365,240 1380,230 1388,300 1393,500 1400,330 1408,600 1416,805 1423,790 1430,650 1443,800 1450,560 1457,470 1465,850 1472,500 1480,260 1487,310" }
];

function parse(str, x0, width, y0) {
  return str.split(" ").map((p) => {
    const [x, y] = p.split(",").map(Number);
    return [x0 + (x * width) / 1568, y0 + y / 3];
  });
}

// monotone cubic through the points, so peaks don't overshoot
function smooth(pts) {
  const n = pts.length;
  const slope = (i) => (pts[i + 1][1] - pts[i][1]) / (pts[i + 1][0] - pts[i][0]);
  const m = pts.map((_, i) => {
    if (i === 0) return slope(0);
    if (i === n - 1) return slope(n - 2);
    const a = slope(i - 1), b = slope(i);
    return a * b <= 0 ? 0 : (2 * a * b) / (a + b);
  });
  let d = `M${pts[0]}`;
  for (let i = 0; i < n - 1; i++) {
    const [x1, y1] = pts[i], [x2, y2] = pts[i + 1];
    const h = (x2 - x1) / 3;
    d += `C${x1 + h},${y1 + m[i] * h} ${x2 - h},${y2 - m[i + 1] * h} ${x2},${y2}`;
  }
  return d;
}

for (const t of data) {
  const pts = parse(t.low, 620, 720, t.y0).concat(parse(t.high, 1320, 728, t.y0));
  add(traces, "path", { class: "trace", stroke: t.color, d: smooth(pts) });
}
```
